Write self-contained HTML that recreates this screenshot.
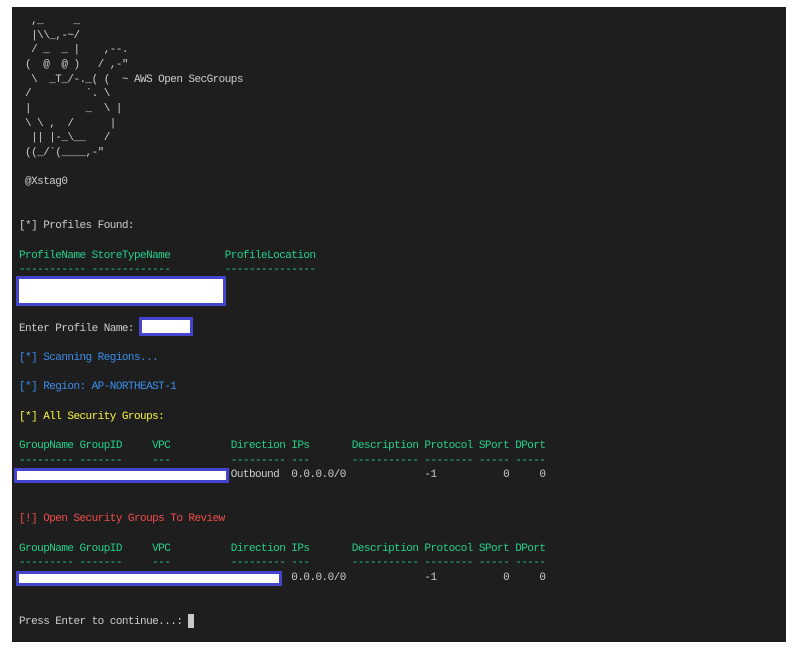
<!DOCTYPE html>
<html><head><meta charset="utf-8"><style>
html,body{margin:0;padding:0;background:#fff;width:800px;height:650px;overflow:hidden}
#t{position:absolute;left:12px;top:7px;width:774px;height:635px;background:#1e1e1e}
pre{position:absolute;left:19px;top:14px;margin:0;font-family:"Liberation Mono",monospace;font-size:11px;letter-spacing:-0.55px;line-height:14.65px;color:#cccccc;white-space:pre}
.g{color:#23d18b}.b{color:#3b8eea}.y{color:#f5f543}.r{color:#f14c4c}
.bx{position:absolute;background:#fff;border:3px solid #4444cc;box-sizing:border-box}
</style></head><body>
<div id="t"></div>
<pre>  ,_     _
  |\\_,-~/
  / _  _ |    ,--.
 (  @  @ )   / ,-"
  \  _T_/-._( (  ~ AWS Open SecGroups
 /         `. \
 |         _  \ |
 \ \ ,  /      |
  || |-_\__   /
 ((_/`(____,-"

 @Xstag0


[*] Profiles Found:

<span class="g">ProfileName StoreTypeName         ProfileLocation</span>
<span class="g">----------- -------------         ---------------</span>



Enter Profile Name:

<span class="b">[*] Scanning Regions...</span>

<span class="b">[*] Region: AP-NORTHEAST-1</span>

<span class="y">[*] All Security Groups:</span>

<span class="g">GroupName GroupID     VPC          Direction IPs       Description Protocol SPort DPort</span>
<span class="g">--------- -------     ---          --------- ---       ----------- -------- ----- -----</span>
                                   Outbound  0.0.0.0/0             -1           0     0


<span class="r">[!] Open Security Groups To Review</span>

<span class="g">GroupName GroupID     VPC          Direction IPs       Description Protocol SPort DPort</span>
<span class="g">--------- -------     ---          --------- ---       ----------- -------- ----- -----</span>
                                             0.0.0.0/0             -1           0     0


Press Enter to continue...:</pre>
<div class="bx" style="left:16px;top:276px;width:210px;height:30px"></div>
<div class="bx" style="left:139px;top:317px;width:54px;height:19px"></div>
<div class="bx" style="left:14px;top:468px;width:215px;height:15px"></div>
<div class="bx" style="left:16px;top:571px;width:266px;height:15px"></div>
<div style="position:absolute;left:188px;top:614px;width:6px;height:14px;background:#c8c8c8"></div>
</body></html>
